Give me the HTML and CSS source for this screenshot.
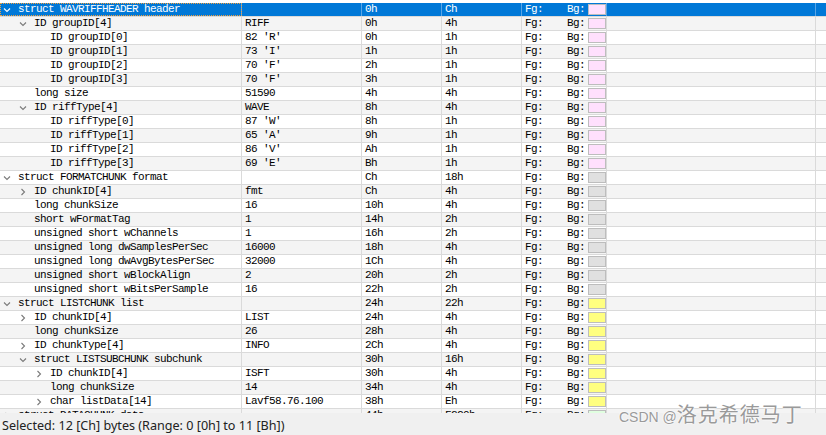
FILE: index.html
```html
<!DOCTYPE html>
<html>
<head>
<meta charset="utf-8">
<link rel="stylesheet" href="styles.css">
</head>
<body>
<div class="app">
  <div class="tree">
    <div class="row sel">
      <div class="c name l0"><span class="tw"><svg class="ar" viewBox="0 0 8 8"><path d="M1 2.5 L4 5.5 L7 2.5"/></svg></span>struct WAVRIFFHEADER header</div>
      <div class="c"></div><div class="c">0h</div><div class="c">Ch</div>
      <div class="c fb"><span class="fg">Fg:</span><span class="bgl">Bg:</span><span class="sw pink"></span></div><div class="c last"></div>
    </div>
    <div class="row alt">
      <div class="c name l1"><span class="tw"><svg class="ar" viewBox="0 0 8 8"><path d="M1 2.5 L4 5.5 L7 2.5"/></svg></span>ID groupID[4]</div>
      <div class="c">RIFF</div><div class="c">0h</div><div class="c">4h</div>
      <div class="c fb"><span class="fg">Fg:</span><span class="bgl">Bg:</span><span class="sw pink"></span></div><div class="c last"></div>
    </div>
    <div class="row">
      <div class="c name l2"><span class="tw"></span>ID groupID[0]</div>
      <div class="c">82 'R'</div><div class="c">0h</div><div class="c">1h</div>
      <div class="c fb"><span class="fg">Fg:</span><span class="bgl">Bg:</span><span class="sw pink"></span></div><div class="c last"></div>
    </div>
    <div class="row alt">
      <div class="c name l2"><span class="tw"></span>ID groupID[1]</div>
      <div class="c">73 'I'</div><div class="c">1h</div><div class="c">1h</div>
      <div class="c fb"><span class="fg">Fg:</span><span class="bgl">Bg:</span><span class="sw pink"></span></div><div class="c last"></div>
    </div>
    <div class="row">
      <div class="c name l2"><span class="tw"></span>ID groupID[2]</div>
      <div class="c">70 'F'</div><div class="c">2h</div><div class="c">1h</div>
      <div class="c fb"><span class="fg">Fg:</span><span class="bgl">Bg:</span><span class="sw pink"></span></div><div class="c last"></div>
    </div>
    <div class="row alt">
      <div class="c name l2"><span class="tw"></span>ID groupID[3]</div>
      <div class="c">70 'F'</div><div class="c">3h</div><div class="c">1h</div>
      <div class="c fb"><span class="fg">Fg:</span><span class="bgl">Bg:</span><span class="sw pink"></span></div><div class="c last"></div>
    </div>
    <div class="row">
      <div class="c name l1"><span class="tw"></span>long size</div>
      <div class="c">51590</div><div class="c">4h</div><div class="c">4h</div>
      <div class="c fb"><span class="fg">Fg:</span><span class="bgl">Bg:</span><span class="sw pink"></span></div><div class="c last"></div>
    </div>
    <div class="row alt">
      <div class="c name l1"><span class="tw"><svg class="ar" viewBox="0 0 8 8"><path d="M1 2.5 L4 5.5 L7 2.5"/></svg></span>ID riffType[4]</div>
      <div class="c">WAVE</div><div class="c">8h</div><div class="c">4h</div>
      <div class="c fb"><span class="fg">Fg:</span><span class="bgl">Bg:</span><span class="sw pink"></span></div><div class="c last"></div>
    </div>
    <div class="row">
      <div class="c name l2"><span class="tw"></span>ID riffType[0]</div>
      <div class="c">87 'W'</div><div class="c">8h</div><div class="c">1h</div>
      <div class="c fb"><span class="fg">Fg:</span><span class="bgl">Bg:</span><span class="sw pink"></span></div><div class="c last"></div>
    </div>
    <div class="row alt">
      <div class="c name l2"><span class="tw"></span>ID riffType[1]</div>
      <div class="c">65 'A'</div><div class="c">9h</div><div class="c">1h</div>
      <div class="c fb"><span class="fg">Fg:</span><span class="bgl">Bg:</span><span class="sw pink"></span></div><div class="c last"></div>
    </div>
    <div class="row">
      <div class="c name l2"><span class="tw"></span>ID riffType[2]</div>
      <div class="c">86 'V'</div><div class="c">Ah</div><div class="c">1h</div>
      <div class="c fb"><span class="fg">Fg:</span><span class="bgl">Bg:</span><span class="sw pink"></span></div><div class="c last"></div>
    </div>
    <div class="row alt">
      <div class="c name l2"><span class="tw"></span>ID riffType[3]</div>
      <div class="c">69 'E'</div><div class="c">Bh</div><div class="c">1h</div>
      <div class="c fb"><span class="fg">Fg:</span><span class="bgl">Bg:</span><span class="sw pink"></span></div><div class="c last"></div>
    </div>
    <div class="row">
      <div class="c name l0"><span class="tw"><svg class="ar" viewBox="0 0 8 8"><path d="M1 2.5 L4 5.5 L7 2.5"/></svg></span>struct FORMATCHUNK format</div>
      <div class="c"></div><div class="c">Ch</div><div class="c">18h</div>
      <div class="c fb"><span class="fg">Fg:</span><span class="bgl">Bg:</span><span class="sw gray"></span></div><div class="c last"></div>
    </div>
    <div class="row alt">
      <div class="c name l1"><span class="tw"><svg class="ar" viewBox="0 0 8 8"><path d="M2.5 1 L5.5 4 L2.5 7"/></svg></span>ID chunkID[4]</div>
      <div class="c">fmt</div><div class="c">Ch</div><div class="c">4h</div>
      <div class="c fb"><span class="fg">Fg:</span><span class="bgl">Bg:</span><span class="sw gray"></span></div><div class="c last"></div>
    </div>
    <div class="row">
      <div class="c name l1"><span class="tw"></span>long chunkSize</div>
      <div class="c">16</div><div class="c">10h</div><div class="c">4h</div>
      <div class="c fb"><span class="fg">Fg:</span><span class="bgl">Bg:</span><span class="sw gray"></span></div><div class="c last"></div>
    </div>
    <div class="row alt">
      <div class="c name l1"><span class="tw"></span>short wFormatTag</div>
      <div class="c">1</div><div class="c">14h</div><div class="c">2h</div>
      <div class="c fb"><span class="fg">Fg:</span><span class="bgl">Bg:</span><span class="sw gray"></span></div><div class="c last"></div>
    </div>
    <div class="row">
      <div class="c name l1"><span class="tw"></span>unsigned short wChannels</div>
      <div class="c">1</div><div class="c">16h</div><div class="c">2h</div>
      <div class="c fb"><span class="fg">Fg:</span><span class="bgl">Bg:</span><span class="sw gray"></span></div><div class="c last"></div>
    </div>
    <div class="row alt">
      <div class="c name l1"><span class="tw"></span>unsigned long dwSamplesPerSec</div>
      <div class="c">16000</div><div class="c">18h</div><div class="c">4h</div>
      <div class="c fb"><span class="fg">Fg:</span><span class="bgl">Bg:</span><span class="sw gray"></span></div><div class="c last"></div>
    </div>
    <div class="row">
      <div class="c name l1"><span class="tw"></span>unsigned long dwAvgBytesPerSec</div>
      <div class="c">32000</div><div class="c">1Ch</div><div class="c">4h</div>
      <div class="c fb"><span class="fg">Fg:</span><span class="bgl">Bg:</span><span class="sw gray"></span></div><div class="c last"></div>
    </div>
    <div class="row alt">
      <div class="c name l1"><span class="tw"></span>unsigned short wBlockAlign</div>
      <div class="c">2</div><div class="c">20h</div><div class="c">2h</div>
      <div class="c fb"><span class="fg">Fg:</span><span class="bgl">Bg:</span><span class="sw gray"></span></div><div class="c last"></div>
    </div>
    <div class="row">
      <div class="c name l1"><span class="tw"></span>unsigned short wBitsPerSample</div>
      <div class="c">16</div><div class="c">22h</div><div class="c">2h</div>
      <div class="c fb"><span class="fg">Fg:</span><span class="bgl">Bg:</span><span class="sw gray"></span></div><div class="c last"></div>
    </div>
    <div class="row alt">
      <div class="c name l0"><span class="tw"><svg class="ar" viewBox="0 0 8 8"><path d="M1 2.5 L4 5.5 L7 2.5"/></svg></span>struct LISTCHUNK list</div>
      <div class="c"></div><div class="c">24h</div><div class="c">22h</div>
      <div class="c fb"><span class="fg">Fg:</span><span class="bgl">Bg:</span><span class="sw yel"></span></div><div class="c last"></div>
    </div>
    <div class="row">
      <div class="c name l1"><span class="tw"><svg class="ar" viewBox="0 0 8 8"><path d="M2.5 1 L5.5 4 L2.5 7"/></svg></span>ID chunkID[4]</div>
      <div class="c">LIST</div><div class="c">24h</div><div class="c">4h</div>
      <div class="c fb"><span class="fg">Fg:</span><span class="bgl">Bg:</span><span class="sw yel"></span></div><div class="c last"></div>
    </div>
    <div class="row alt">
      <div class="c name l1"><span class="tw"></span>long chunkSize</div>
      <div class="c">26</div><div class="c">28h</div><div class="c">4h</div>
      <div class="c fb"><span class="fg">Fg:</span><span class="bgl">Bg:</span><span class="sw yel"></span></div><div class="c last"></div>
    </div>
    <div class="row">
      <div class="c name l1"><span class="tw"><svg class="ar" viewBox="0 0 8 8"><path d="M2.5 1 L5.5 4 L2.5 7"/></svg></span>ID chunkType[4]</div>
      <div class="c">INFO</div><div class="c">2Ch</div><div class="c">4h</div>
      <div class="c fb"><span class="fg">Fg:</span><span class="bgl">Bg:</span><span class="sw yel"></span></div><div class="c last"></div>
    </div>
    <div class="row alt">
      <div class="c name l1"><span class="tw"><svg class="ar" viewBox="0 0 8 8"><path d="M1 2.5 L4 5.5 L7 2.5"/></svg></span>struct LISTSUBCHUNK subchunk</div>
      <div class="c"></div><div class="c">30h</div><div class="c">16h</div>
      <div class="c fb"><span class="fg">Fg:</span><span class="bgl">Bg:</span><span class="sw yel"></span></div><div class="c last"></div>
    </div>
    <div class="row">
      <div class="c name l2"><span class="tw"><svg class="ar" viewBox="0 0 8 8"><path d="M2.5 1 L5.5 4 L2.5 7"/></svg></span>ID chunkID[4]</div>
      <div class="c">ISFT</div><div class="c">30h</div><div class="c">4h</div>
      <div class="c fb"><span class="fg">Fg:</span><span class="bgl">Bg:</span><span class="sw yel"></span></div><div class="c last"></div>
    </div>
    <div class="row alt">
      <div class="c name l2"><span class="tw"></span>long chunkSize</div>
      <div class="c">14</div><div class="c">34h</div><div class="c">4h</div>
      <div class="c fb"><span class="fg">Fg:</span><span class="bgl">Bg:</span><span class="sw yel"></span></div><div class="c last"></div>
    </div>
    <div class="row">
      <div class="c name l2"><span class="tw"><svg class="ar" viewBox="0 0 8 8"><path d="M2.5 1 L5.5 4 L2.5 7"/></svg></span>char listData[14]</div>
      <div class="c">Lavf58.76.100</div><div class="c">38h</div><div class="c">Eh</div>
      <div class="c fb"><span class="fg">Fg:</span><span class="bgl">Bg:</span><span class="sw yel"></span></div><div class="c last"></div>
    </div>
    <div class="row alt">
      <div class="c name l0"><span class="tw"><svg class="ar" viewBox="0 0 8 8"><path d="M2.5 1 L5.5 4 L2.5 7"/></svg></span>struct DATACHUNK data</div>
      <div class="c"></div><div class="c">44h</div><div class="c">F2C0h</div>
      <div class="c fb"><span class="fg">Fg:</span><span class="bgl">Bg:</span><span class="sw grn"></span></div><div class="c last"></div>
    </div>
  </div>
  <div class="status">Selected: 12 [Ch] bytes (Range: 0 [0h] to 11 [Bh])</div>
  <div class="wm"><span class="wm-l">CSDN @</span><span class="wm-c">洛克希德马丁</span></div>
</div>
</body>
</html>
```
FILE: styles.css
```css
* { box-sizing: border-box; }
html, body { margin: 0; padding: 0; background: #fff; }
.app {
  position: relative;
  width: 826px;
  height: 435px;
  overflow: hidden;
  display: flex;
  flex-direction: column;
}
.tree {
  height: 413px;
  flex: none;
  overflow: hidden;
  padding-top: 3px;
  font-family: "Liberation Mono", monospace;
  font-size: 11px;
  letter-spacing: -0.6px;
  color: #000;
}
.row {
  display: grid;
  grid-template-columns: 242px 120px 80px 80px 85px 209px;
  height: 14px;
  border-bottom: 1px solid #dadada;
  background: #fff;
}
.row.alt { background: #f4f4f4; }
.c {
  border-right: 1px solid #dadada;
  padding-left: 3px;
  line-height: 13px;
  white-space: nowrap;
  overflow: hidden;
  display: flex;
  align-items: center;
}
.name { padding-left: 2px; }
.name.l1 { padding-left: 18px; }
.name.l2 { padding-left: 34px; }
.tw {
  width: 16px;
  flex: none;
  height: 13px;
  display: flex;
  align-items: center;
  justify-content: flex-start;
  padding-left: 1px;
}
.ar {
  width: 8px;
  height: 8px;
  fill: none;
  stroke: #7a7a7a;
  stroke-width: 1.1;
}
.fb { padding-left: 3px; }
.fg { width: 42px; flex: none; }
.bgl { width: 21px; flex: none; }
.sw {
  width: 18px;
  height: 11px;
  flex: none;
  border: 1px solid #bdbdbd;
}
.sw.pink { background: #ffe0fd; }
.sw.gray { background: #e0e0e0; }
.sw.yel { background: #ffff80; }
.sw.grn { background: #e0ffe0; }
.last { border-right: 1px solid #dadada; }

.row.sel { background: #0078d7; color: #fff; border-bottom-color: #dadada; }
.row.sel .c { border-right-color: #5aa5e5; }
.row.sel .name { outline: 1px dotted #f0a040; outline-offset: -1px; }
.row.sel .ar { stroke: #fff; }

.status {
  flex: 1;
  background: #f0f0f0;
  font-family: "Noto Sans", sans-serif;
  font-size: 12.6px;
  color: #222;
  padding-left: 2px;
  padding-top: 5px;
  line-height: 16px;
  white-space: nowrap;
}
.wm {
  position: absolute;
  left: 619px;
  top: 402px;
  color: #9a9a9a;
  text-shadow: 0 0 2px #fff, 0 0 2px #fff;
  white-space: nowrap;
  line-height: 24px;
}
.wm-l { font-family: "Liberation Sans", sans-serif; font-size: 14px; }
.wm-c { font-family: "Noto Sans CJK SC", sans-serif; font-size: 20px; letter-spacing: 1px; }
```
